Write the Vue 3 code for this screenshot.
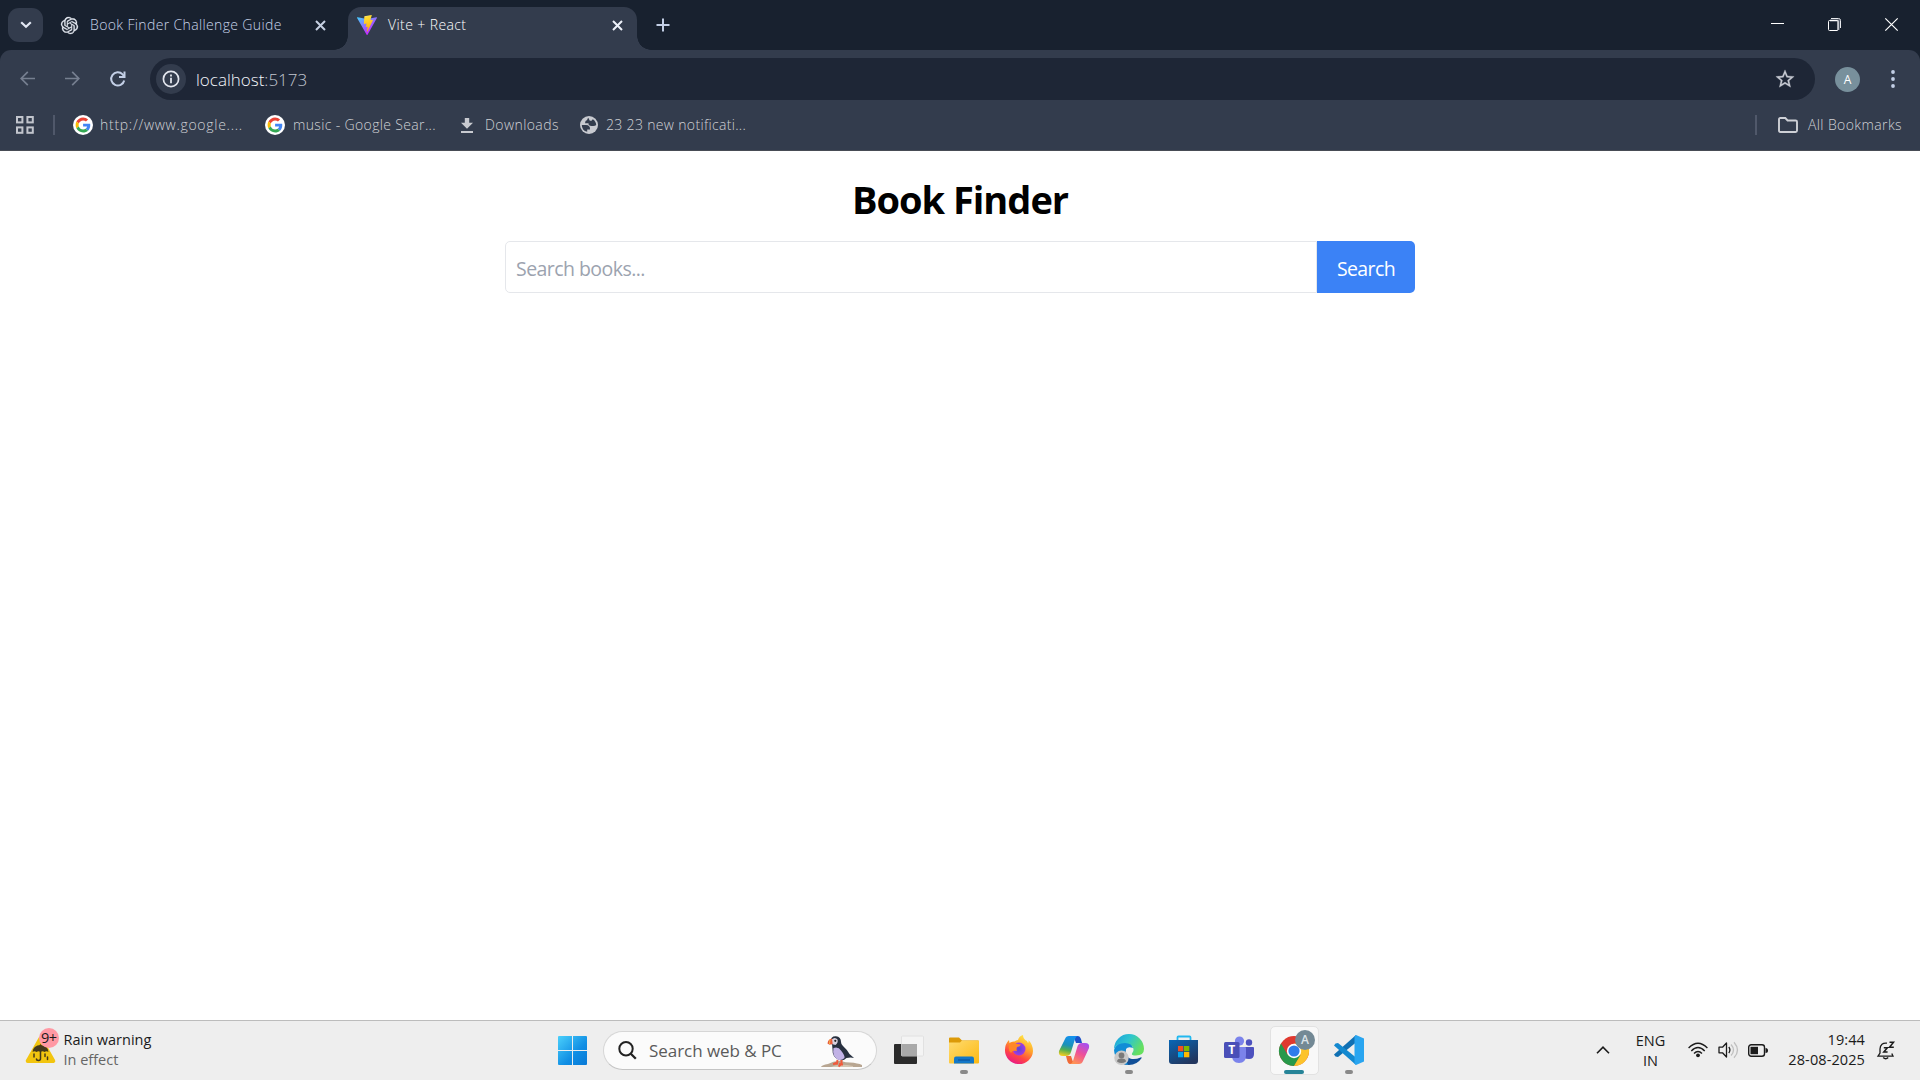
<script setup>
const bookmarks = [
  { icon: 'google', label: 'http://www.google....', cls: 'bm-a' },
  { icon: 'google', label: 'music - Google Sear...', cls: 'bm-b' },
  { icon: 'download', label: 'Downloads', cls: 'bm-c' },
  { icon: 'globe', label: '23 23 new notificati...', cls: 'bm-d' },
]
</script>

<template>
  <div class="screen">
    <header class="tabstrip">
      <button class="tab-search">
        <svg width="12" height="8" viewBox="0 0 12 8"><path d="M1.2 1.2 6 5.8 10.8 1.2" fill="none" stroke="#e3e8f4" stroke-width="2.2" /></svg>
      </button>
      <div class="tab idle">
        <svg class="openai" width="17" height="17" viewBox="0 0 24 24"><path fill="#e8edf5" stroke="#e8edf5" stroke-width=".4" d="M22.2819 9.8211a5.9847 5.9847 0 0 0-.5157-4.9108 6.0462 6.0462 0 0 0-6.5098-2.9A6.0651 6.0651 0 0 0 4.9807 4.1818a5.9847 5.9847 0 0 0-3.9977 2.9 6.0462 6.0462 0 0 0 .7427 7.0966 5.98 5.98 0 0 0 .511 4.9107 6.051 6.051 0 0 0 6.5146 2.9001A5.9847 5.9847 0 0 0 13.2599 24a6.0557 6.0557 0 0 0 5.7718-4.2058 5.9894 5.9894 0 0 0 3.9977-2.9001 6.0557 6.0557 0 0 0-.7475-7.0729zm-9.022 12.6081a4.4755 4.4755 0 0 1-2.8764-1.0408l.1419-.0804 4.7783-2.7582a.7948.7948 0 0 0 .3927-.6813v-6.7369l2.02 1.1686a.071.071 0 0 1 .038.052v5.5826a4.504 4.504 0 0 1-4.4945 4.4944zm-9.6607-4.1254a4.4708 4.4708 0 0 1-.5346-3.0137l.142.0852 4.783 2.7582a.7712.7712 0 0 0 .7806 0l5.8428-3.3685v2.3324a.0804.0804 0 0 1-.0332.0615L9.74 19.9502a4.4992 4.4992 0 0 1-6.1408-1.6464zM2.3408 7.8956a4.485 4.485 0 0 1 2.3655-1.9728V11.6a.7664.7664 0 0 0 .3879.6765l5.8144 3.3543-2.0201 1.1685a.0757.0757 0 0 1-.071 0l-4.8303-2.7865A4.504 4.504 0 0 1 2.3408 7.872zm16.5963 3.8558L13.1038 8.364 15.1192 7.2a.0757.0757 0 0 1 .071 0l4.8303 2.7913a4.4944 4.4944 0 0 1-.6765 8.1042v-5.6772a.79.79 0 0 0-.407-.667zm2.0107-3.0231l-.142-.0852-4.7735-2.7818a.7759.7759 0 0 0-.7854 0L9.409 9.2297V6.8974a.0662.0662 0 0 1 .0284-.0615l4.8303-2.7866a4.4992 4.4992 0 0 1 6.6802 4.66zM8.3065 12.863l-2.02-1.1638a.0804.0804 0 0 1-.038-.0567V6.0742a4.4992 4.4992 0 0 1 7.3757-3.4537l-.142.0805L8.704 5.459a.7948.7948 0 0 0-.3927.6813zm1.0976-2.3654l2.602-1.4998 2.6069 1.4998v2.9994l-2.5974 1.4997-2.6067-1.4997Z" /></svg>
        <span class="tab-title t-idle">Book Finder Challenge Guide</span>
        <svg class="tab-x" width="11" height="11" viewBox="0 0 11 11"><path d="M1 1 10 10M10 1 1 10" stroke="#c6d0e2" stroke-width="2" /></svg>
      </div>
      <div class="tab active">
        <svg class="vite" width="20" height="20" viewBox="0 0 256 257">
          <defs>
            <linearGradient id="va" x1="0" y1="0" x2=".6" y2=".8"><stop offset="0" stop-color="#41d1ff" /><stop offset="1" stop-color="#bd34fe" /></linearGradient>
            <linearGradient id="vb" x1=".4" y1="0" x2=".6" y2="1"><stop offset="0" stop-color="#ffea83" /><stop offset=".1" stop-color="#ffdd35" /><stop offset="1" stop-color="#ffa800" /></linearGradient>
          </defs>
          <path fill="url(#va)" d="M255.153 37.938L134.897 252.976c-2.483 4.44-8.862 4.466-11.382.048L.875 37.958c-2.746-4.814 1.371-10.646 6.827-9.67l120.385 21.517a6.537 6.537 0 0 0 2.322-.004l117.867-21.483c5.438-.991 9.574 4.796 6.877 9.62Z" />
          <path fill="url(#vb)" d="M185.432.063L96.44 17.501a3.268 3.268 0 0 0-2.634 3.014l-5.474 92.456a3.268 3.268 0 0 0 3.997 3.378l24.777-5.718c2.318-.535 4.413 1.507 3.936 3.838l-7.361 36.047c-.495 2.426 1.782 4.5 4.151 3.78l15.304-4.649c2.372-.72 4.652 1.36 4.15 3.788l-11.698 56.621c-.732 3.542 3.979 5.473 5.943 2.437l1.313-2.028l72.516-144.72c1.215-2.423-.88-5.186-3.54-4.672l-25.505 4.922c-2.396.462-4.435-1.77-3.759-4.114l16.646-57.705c.677-2.35-1.37-4.583-3.769-4.113Z" />
        </svg>
        <span class="tab-title t-active">Vite + React</span>
        <svg class="tab-x" width="11" height="11" viewBox="0 0 11 11"><path d="M1 1 10 10M10 1 1 10" stroke="#eef2fa" stroke-width="2" /></svg>
      </div>
      <svg class="plus" width="14" height="14" viewBox="0 0 14 14"><path d="M7 .5v13M.5 7h13" stroke="#c3cfe6" stroke-width="2" /></svg>
      <div class="win-controls">
        <svg width="13" height="13" viewBox="0 0 13 13"><path d="M0 5.5h13" stroke="#fff" /></svg>
        <svg width="13" height="13" viewBox="0 0 13 13"><path d="M3 .5h7.5a2 2 0 0 1 2 2V10" fill="none" stroke="#e8eaee" /><path d="M2 2.5h8.5V12" fill="none" stroke="#8a909c" stroke-width="2" /><rect x=".5" y="2.5" width="9.5" height="10" rx="1" fill="none" stroke="#fff" /></svg>
        <svg width="13" height="13" viewBox="0 0 13 13"><path d="M.3.3 12.7 12.7M12.7.3.3 12.7" stroke="#fff" stroke-width="1.2" /></svg>
      </div>
    </header>

    <div class="chrome">
      <div class="toolbar">
        <svg class="nav" width="15" height="15" viewBox="0 0 15 15"><path d="M15 7.5H1.2M7.8 .8 1.2 7.5l6.6 6.7" fill="none" stroke="#767f90" stroke-width="1.7" /></svg>
        <svg class="nav" width="15" height="15" viewBox="0 0 15 15"><path d="M0 7.5h13.8M7.2 .8l6.6 6.7-6.6 6.7" fill="none" stroke="#767f90" stroke-width="1.7" /></svg>
        <svg class="nav" width="16" height="16" viewBox="0 0 16 16"><path d="M14.2 9.4A6.600 6.600 0 1 1 12.600 3.400l1.600 1.900" fill="none" stroke="#c3cfe6" stroke-width="2" /><path d="M14.500 .5v5.500H9" fill="none" stroke="#c3cfe6" stroke-width="2" /></svg>
        <div class="omnibox">
          <span class="info">
            <svg width="18" height="18" viewBox="0 0 18 18"><circle cx="9" cy="9" r="7.6" fill="none" stroke="#e3e6ee" stroke-width="1.7" /><path d="M9 7.8v5.4M9 4.6v2" stroke="#e3e6ee" stroke-width="1.8" /></svg>
          </span>
          <span class="url">localhost<span class="port">:5173</span></span>
          <svg class="star" width="22" height="22" viewBox="0 0 24 24"><path fill="#c7cad3" d="M22 9.24l-7.19-.62L12 2 9.19 8.63 2 9.24l5.46 4.73L5.82 21 12 17.27 18.18 21l-1.63-7.03L22 9.24zM12 15.4l-3.76 2.27 1-4.28-3.32-2.88 4.38-.38L12 6.1l1.71 4.04 4.38.38-3.32 2.88 1 4.28L12 15.4z" stroke="#c7cad3" stroke-width=".3" /></svg>
        </div>
        <span class="avatar">A</span>
        <svg class="dots" width="4" height="18" viewBox="0 0 4 18"><g fill="#c3cfe6"><circle cx="2" cy="2" r="1.9" /><circle cx="2" cy="9" r="1.9" /><circle cx="2" cy="16" r="1.9" /></g></svg>
      </div>
      <div class="bookmarks">
        <svg class="apps" width="18" height="18" viewBox="0 0 18 18"><g fill="none" stroke="#c2c5cd" stroke-width="2"><rect x="1" y="1" width="5.4" height="5.4" /><rect x="11.4" y="1" width="5.4" height="5.4" /><rect x="1" y="11.4" width="5.4" height="5.4" /><rect x="11.4" y="11.4" width="5.4" height="5.4" /></g></svg>
        <i class="sep"></i>
        <div v-for="b in bookmarks" :key="b.label" class="bookmark" :class="b.cls">
          <svg v-if="b.icon === 'google'" width="20" height="20" viewBox="0 0 20 20">
            <circle cx="10" cy="10" r="10" fill="#fff" />
            <g transform="translate(2.6 2.5) scale(.312)">
              <path fill="#EA4335" d="M24 9.5c3.54 0 6.71 1.22 9.21 3.6l6.85-6.85C35.9 2.38 30.47 0 24 0 14.62 0 6.51 5.38 2.56 13.22l7.98 6.19C12.43 13.72 17.74 9.5 24 9.5z" />
              <path fill="#4285F4" d="M46.98 24.55c0-1.57-.15-3.09-.38-4.55H24v9.02h12.94c-.58 2.96-2.26 5.48-4.78 7.18l7.73 6c4.51-4.18 7.09-10.36 7.09-17.65z" />
              <path fill="#FBBC05" d="M10.53 28.59c-.48-1.45-.76-2.99-.76-4.59s.27-3.14.76-4.59l-7.98-6.19C.92 16.46 0 20.12 0 24c0 3.88.92 7.54 2.56 10.78l7.97-6.19z" />
              <path fill="#34A853" d="M24 48c6.48 0 11.93-2.13 15.89-5.81l-7.73-6c-2.15 1.45-4.92 2.3-8.16 2.3-6.26 0-11.57-4.22-13.47-9.91l-7.98 6.19C6.51 42.62 14.62 48 24 48z" />
            </g>
          </svg>
          <svg v-else-if="b.icon === 'download'" width="12" height="15" viewBox="0 0 12 15"><path fill="#c8cad0" d="M3.8 0h4.4v4.8H12L6 10.8 0 4.8h3.8zM0 13h12v2H0z" /></svg>
          <svg v-else width="18" height="18" viewBox="0 0 18 18"><circle cx="9" cy="9" r="9" fill="#c8cad0" /><path fill="#333c4d" d="M1.800 9h4.200q4.300 0 4 4.500H7.200v2.300A7 7 0 0 1 1.800 9zM8.300 1.800Q7 3 7.200 4 5 4.400 5 7.300h3.500Q8.300 10 11.500 10h1.700q2 0 3-1A7.200 7.200 0 0 0 12.800 3.200L11.500 4.800H9.800z" /></svg>
          <span>{{ b.label }}</span>
        </div>
        <div class="all">
          <i class="sep"></i>
          <svg width="20" height="16" viewBox="0 0 20 16"><path d="M1 13.5V2.3Q1 1 2.3 1h5l2.3 2.5h8Q19 3.5 19 4.8v8.7Q19 15 17.6 15H2.4Q1 15 1 13.5z" fill="none" stroke="#ced0d6" stroke-width="1.9" /></svg>
          <span>All Bookmarks</span>
        </div>
      </div>
    </div>

    <main class="page">
      <h1>Book Finder</h1>
      <div class="search-row">
        <div class="field">Search books...</div>
        <button class="go">Search</button>
      </div>
    </main>

    <footer class="taskbar">
      <div class="weather">
        <svg width="36" height="38" viewBox="0 0 36 38">
          <path d="M15.5 10.5 28.3 33H2.7z" fill="#f2c50f" stroke="#f2c50f" stroke-width="4" stroke-linejoin="round" />
          <path d="M7.5 24a8 7 0 0 1 16 0q-2-1.400-4 0-2-1.400-4 0-2-1.400-4 0-2-1.400-4 0z" fill="#443a1b" /><path d="M15.5 17v13.500q0 2-2 2t-2-1.500M9 26v3M20 26v2.500M22.500 29v2.500" fill="none" stroke="#443a1b" stroke-width="1.5" stroke-linecap="round" />
          <circle cx="24" cy="10" r="10" fill="#ff99a4" />
          <text x="24" y="15" text-anchor="middle" textLength="16">9+</text>
        </svg>
        <div class="wtext"><span class="w1">Rain warning</span><span class="w2">In effect</span></div>
      </div>

      <div class="dock">
        <div class="cell">
          <svg width="29" height="29" viewBox="0 0 29 29"><defs><linearGradient id="wn" x1="0" y1="0" x2="1" y2="1"><stop offset="0" stop-color="#4bd0fb" /><stop offset=".6" stop-color="#108ee4" /><stop offset="1" stop-color="#0879d6" /></linearGradient></defs><path fill="url(#wn)" d="M1 0h13v14H0V1q0-1 1-1zM15 0h13q1 0 1 1v13H15zM0 15h14v14H1q-1 0-1-1zM15 15h14v13q0 1-1 1H15z" /></svg>
        </div>
        <div class="tb-search">
          <svg class="mag" width="19" height="19" viewBox="0 0 19 19"><circle cx="8" cy="7.8" r="6.7" fill="none" stroke="#222" stroke-width="2" /><path d="m12.8 12.8 5 5" stroke="#222" stroke-width="2.3" /></svg>
          <span>Search web &amp; PC</span>
          <svg class="puffin" width="42" height="32" viewBox="0 0 42 32">
            <path d="M0 31q1-2 7-3 6-3.500 13-3 5 1.500 9 1.500 8 .5 12 2.500v2z" fill="#b8a692" /><path d="M10 31q8-4 22-1v1z" fill="#d4c5b2" />
            <path d="M9.500 6Q9.500 0 15 .300q5 .5 5 5.700 0 2.500 2 4 4 3.500 6.500 8l4.500 4-3.500-.5-4 .5q-3 3.500-7.500 2-7-3-6.500-11 .5-4-2-7z" fill="#27303f" />
            <path d="M12.500 12q5-1.500 7.500 2.500 4 5 3.500 7.500-3 3-7 1.500-5.500-3.500-4-11.500z" fill="#c1b2e6" />
            <path d="M10.500 3.500q3.500-3 6 0 1 3-2 5.500L10.500 8z" fill="#d9d2e0" /><path d="M11 2.500Q7 3 6.500 7.500l2 1.200 3.200-.8z" fill="#e75b3b" /><path d="M9 3.500 8.500 8" stroke="#f7b24a" /><circle cx="14.300" cy="4.800" r="1.100" fill="#222" />
            <path d="M16.500 24l-.5 3.500-4 .5M20.500 24v4l-3 2.500M13.500 26.500l2.500 1.500M18 28l4 .5" fill="none" stroke="#f15a3c" stroke-width="2" />
          </svg>
        </div>
        <div class="cell">
          <svg width="30" height="28" viewBox="0 1 30 28"><rect y="9" width="23" height="20" rx="1" fill="#2b2b2b" /><rect x="7.5" y="1" width="22" height="20" rx="1" fill="#f4f4f4" stroke="#ddd" stroke-width=".8" /><path d="M7.500 9H23v12H7.500z" fill="#a9a9a9" /></svg>
        </div>
        <div class="cell">
          <svg width="30" height="27" viewBox="0 1.500 30 27"><defs><linearGradient id="fo" x1="0" y1="0" x2="1" y2="1"><stop offset="0" stop-color="#ffdb70" /><stop offset="1" stop-color="#fcb912" /></linearGradient></defs><path d="M0 9V3q0-1 1-1h9l3 3h16q1 0 1 1v5H0z" fill="#dc9a08" /><path d="M0 7h11l2-2h16q1 0 1 1v21q0 1-1 1H1q-1 0-1-1z" fill="url(#fo)" /><path d="M5 28v-5q0-2 2-2h16q2 0 2 2v5z" fill="#1478c8" /><path d="M9 24.500h12" stroke="#0d559c" stroke-width="1.200" /></svg>
          <i class="run"></i>
        </div>
        <div class="cell">
          <svg class="lift" width="28" height="29" viewBox="0 0 28 29"><defs><linearGradient id="ff" x1=".8" y1="0" x2=".3" y2="1"><stop offset="0" stop-color="#fff04a" /><stop offset=".4" stop-color="#ffa52b" /><stop offset=".72" stop-color="#ff4543" /><stop offset="1" stop-color="#e8178a" /></linearGradient><radialGradient id="fp"><stop offset="0" stop-color="#5844d8" /><stop offset="1" stop-color="#a33be0" /></radialGradient></defs><path d="M0 15Q0 9 4 5l.5 3Q7 6 9.500 6.500 11 5 13 5q1-4 5-5 0 4 4 6l1 2q1-1 .5-3Q28 10 28 16a14 13.500 0 0 1-28-1z" fill="url(#ff)" /><circle cx="14" cy="14" r="6.500" fill="url(#fp)" /><path d="M5 8q4-2 7 1l4 .5q-1 2-4 2.500-1 2.500 0 4-5-1-6 2Q2 14 5 8z" fill="#ff8727" /></svg>
        </div>
        <div class="cell">
          <svg width="30" height="28" viewBox="0 0 30 28"><defs><linearGradient id="ca" x1=".5" y1="0" x2=".3" y2="1"><stop offset="0" stop-color="#1491ee" /><stop offset=".45" stop-color="#1a91b8" /><stop offset=".7" stop-color="#50ae50" /><stop offset="1" stop-color="#f4cd1f" /></linearGradient><linearGradient id="cb" x1=".8" y1="0" x2=".3" y2="1"><stop offset="0" stop-color="#a64ff1" /><stop offset=".5" stop-color="#ee5099" /><stop offset="1" stop-color="#ff9354" /></linearGradient></defs><path d="M15 0h4q2 0 3 3l1 4h-6q-2-5-2-7z" fill="#1b51c9" /><path d="M12 20q1 5 4 8h-5q-2 0-3-4l-1-4z" fill="#f06a36" /><path d="M6 3q1-3 4-3h9q-2 0-3 3l-4 13q-1 4-5 4H4q-5 0-4-5z" fill="url(#ca)" /><path d="M24 25q-1 3-4 3h-9q2 0 3-3l4-13q1-5 5-5h3q5 0 4 5z" fill="url(#cb)" /></svg>
        </div>
        <div class="cell">
          <svg width="30" height="30" viewBox="0 0 30 30"><defs><linearGradient id="ea" x1="0" y1="0" x2="1" y2=".5"><stop offset="0" stop-color="#199ddd" /><stop offset=".5" stop-color="#2dc5cf" /><stop offset="1" stop-color="#67e05f" /></linearGradient></defs><path d="M12 13q-2 8 4 10.500 5 1.500 10.500-1 1.500-.5 1 .8Q23 30 15 30 5 30 2 20 4 12 12 13z" fill="#114f97" /><path d="M0 15Q3 7 11 7q7 0 8 6-5-2-7 1-3 6 2 16Q1 28 0 15z" fill="#108dd6" /><path d="M0 14A15 15 0 0 1 30 14q0 6.500-8 6.500-5 0-4-2 2-2 1.500-4.500Q18 8 11 8 3 8 0 14z" fill="url(#ea)" /><circle cx="7.5" cy="22.800" r="7.200" fill="#c9c9c9" /><circle cx="7.5" cy="20.500" r="2.900" fill="#7a7a7a" /><path d="M3 26.500q0-3 4.500-3t4.500 3q-4.500 3.200-9 0z" fill="#7a7a7a" /></svg>
          <i class="run"></i>
        </div>
        <div class="cell">
          <svg width="30" height="30" viewBox="0 0 30 30"><defs><linearGradient id="st" x1="0" y1="0" x2=".6" y2="1"><stop offset="0" stop-color="#0867b6" /><stop offset="1" stop-color="#22365e" /></linearGradient></defs><path d="M8.500 8V2.500q0-1 1-1h11q1 0 1 1V8" fill="none" stroke="#22b8ef" stroke-width="1.800" /><path d="M0 5h29v21q0 3-3 3H3q-3 0-3-3z" fill="url(#st)" /><path d="M9 11h5.300v5.300H9z" fill="#f25022" /><path d="M15 11h5.300v5.300H15z" fill="#7fba00" /><path d="M9 17h5.300v5.300H9z" fill="#00a4ef" /><path d="M15 17h5.300v5.300H15z" fill="#ffb900" /></svg>
        </div>
        <div class="cell">
          <svg width="30" height="28" viewBox="0 0 30 28"><circle cx="25" cy="6.500" r="3.200" fill="#4d51be" /><path d="M20 11h9q1 0 1 1v6q0 5-5 5-3 0-5-1z" fill="#4d51be" /><circle cx="15.500" cy="5" r="4.600" fill="#7b83eb" /><path d="M9 11h12q1 0 1 1v7q0 8-7 8t-7-8z" fill="#7b83eb" /><rect y="6" width="15.500" height="16" rx="1.500" fill="#4a4fb8" /><text class="teams-t" x="7.800" y="18.200" text-anchor="middle">T</text></svg>
        </div>
        <div class="cell">
          <div class="tile">
            <svg width="36" height="38" viewBox="0 0 36 38"><circle cx="15" cy="23" r="15" fill="#e0392f" /><path d="M2 15.500A15 15 0 0 0 15 38l7-11-13.500-.5z" fill="#28994a" /><path d="M28 15.500H15L21.500 27 15 38A15 15 0 0 0 28 15.500z" fill="#fcc32c" /><circle cx="15" cy="23" r="7.200" fill="#fff" /><circle cx="15" cy="23" r="5.600" fill="#2f7ceb" /><circle cx="26" cy="12" r="10" fill="#738995" /><text class="badge-a" x="26" y="16.300" text-anchor="middle">A</text></svg>
          </div>
          <i class="run on"></i>
        </div>
        <div class="cell">
          <svg width="30" height="30" viewBox="0 0 30 30"><path d="M22 7.500 4 22l-2.500-.5L0 19.500 22 0z" fill="#1070b3" /><path d="M22 22.500 4 8l-2.500.5L0 10.500 22 30z" fill="#1389d0" /><path d="M22 0l8 3.500v23L22 30l-1.500-1.500v-27z" fill="#29a5f0" /></svg>
          <i class="run"></i>
        </div>
      </div>

      <div class="tray">
        <svg class="chev" width="14" height="8" viewBox="0 0 14 8"><path d="M1 7.200 7 1.200l6 6" fill="none" stroke="#1b1b1b" stroke-width="1.600" /></svg>
        <div class="lang"><span>ENG</span><span>IN</span></div>
        <svg class="wifi" width="20" height="16" viewBox="0 0 20 16"><g fill="none" stroke="#1b1b1b" stroke-width="1.400"><path d="M.6 6Q10-3.500 19.400 6" /><path d="M3.300 9Q10 2 16.700 9" /><path d="M6 11.600q4-4 8 0" /></g><circle cx="10" cy="13.300" r="1.900" fill="#1b1b1b" /></svg>
        <svg class="vol" width="21" height="18" viewBox="0 0 21 18"><path d="M1 6.200h3.500L8.500 2v14l-4-4.200H1z" fill="none" stroke="#1b1b1b" stroke-width="1.300" stroke-linejoin="round" /><path d="M10.800 6q2.200 3 0 6" fill="none" stroke="#1b1b1b" stroke-width="1.300" /><path d="M13 3.500q5 5.500 0 11M16 1.200q7 8 0 15.600" fill="none" stroke="#c0c0c0" stroke-width="1.300" /></svg>
        <svg class="bat" width="20" height="13" viewBox="0 0 20 13"><rect x=".7" y=".7" width="15.800" height="11.600" rx="2.500" fill="none" stroke="#1b1b1b" stroke-width="1.400" /><path d="M2.500 2.800h7.500v7.400H2.500z" fill="#1b1b1b" /><path d="M17.500 4q2.500 0 2.500 2.500T17.500 9z" fill="#1b1b1b" /></svg>
        <div class="clock"><span>19:44</span><span>28-08-2025</span></div>
        <svg class="bell" width="18" height="19" viewBox="0 0 18 19"><path d="M10 2.200Q3.500 1.500 3 8v4l-2 3.200h15l-1.200-2.700" fill="none" stroke="#1b1b1b" stroke-width="1.300" /><path d="M6.200 16.500q2.500 2.500 5 0M6.800 6.700h3.600l-3.600 4.200h3.800M12.500 1.200h4l-4 5h4.300" fill="none" stroke="#1b1b1b" stroke-width="1.500" /></svg>
      </div>
    </footer>
  </div>
</template>

<style>
body { margin: 0; overflow: hidden; }
</style>

<style scoped>
* { box-sizing: border-box; }
svg { display: block; flex: none; overflow: visible; }
button { border: 0; padding: 0; font: inherit; }
.screen { width: 1920px; height: 1080px; display: flex; flex-direction: column; background: #fff; font-family: "Open Sans", "Noto Sans", sans-serif; font-size: 14px; white-space: nowrap; }

.tabstrip { height: 50px; flex: none; display: flex; align-items: center; background: #18212f; }
.tab-search { width: 35px; height: 34px; margin-left: 8px; border-radius: 11px; background: #333c4d; display: flex; align-items: center; justify-content: center; }
.tab { display: flex; align-items: center; }
.idle { width: 305px; padding-left: 18px; }
.tab-title { flex: 1; font-weight: 300; line-height: 20px; }
.t-idle { color: #c8d4ea; margin-left: 12px; letter-spacing: .36px; }
.idle .tab-x { margin-right: 22.5px; }
.active { position: relative; width: 289px; height: 43px; align-self: flex-end; padding: 0 14px 7px 9px; background: #333c4d; border-radius: 13px 13px 0 0; }
.active::before, .active::after { content: ""; position: absolute; bottom: 0; width: 14px; height: 14px; }
.active::before { left: -14px; background: radial-gradient(circle at 0 0, transparent 13.5px, #333c4d 14px); }
.active::after { right: -14px; background: radial-gradient(circle at 100% 0, transparent 13.5px, #333c4d 14px); }
.t-active { color: #fff; margin-left: 11px; letter-spacing: .4px; }
.plus { margin-left: 19px; }
.win-controls { margin-left: auto; display: flex; align-items: center; gap: 44px; padding: 0 22px 1px 0; }

.chrome { height: 101px; flex: none; background: #18212f; }
.toolbar { height: 58px; display: flex; align-items: center; padding: 0 25px 0 20px; background: #333c4d; border-radius: 11px 11px 0 0; }
.nav { margin-right: 30px; margin-bottom: 1px; }
.nav:nth-child(3) { margin-right: 24px; }
.omnibox { flex: none; width: 1665px; height: 42px; border-radius: 21px; background: #1e2636; display: flex; align-items: center; padding: 0 19px 0 6px; }
.info { width: 30px; height: 30px; border-radius: 50%; background: #333c4d; display: flex; align-items: center; justify-content: center; }
.url { margin-left: 10px; flex: 1; color: #f3f5fa; font-size: 17px; font-weight: 300; line-height: 24px; letter-spacing: 0; padding-top: 1px; }
.port { color: #c4c8d2; }
.avatar { flex: none; width: 25px; height: 25px; margin-left: 20px; border-radius: 50%; background: #78909c; color: #fff; display: flex; align-items: center; justify-content: center; font-size: 12px; font-weight: 500; }
.dots { margin-left: 31px; }
.bookmarks { height: 43px; display: flex; align-items: center; padding: 0 18px 8px 15.5px; color: #d0d1d5; font-weight: 300; background: #333c4d; border-bottom: 1px solid #484c55; }
.sep { width: 2px; height: 20px; background: #50586a; }
.apps + .sep { margin-left: 19px; margin-right: 18.5px; }
.bookmark { display: flex; align-items: center; }
.bookmark span { margin-left: 7px; line-height: 20px; }
.bm-a { width: 192px; }
.bm-a span { letter-spacing: .72px; }
.bm-b { width: 196px; }
.bm-b span { margin-left: 8px; letter-spacing: .35px; }
.bm-c { width: 119px; }
.bm-c span { margin-left: 12px; letter-spacing: .42px; }
.bm-d span { margin-left: 8px; letter-spacing: .33px; }
.all { margin-left: auto; display: flex; align-items: center; height: 20px; }
.all span { letter-spacing: .4px; line-height: 20px; }
.all svg { margin: 0 10px 0 21px; }

.page { flex: 1; display: flex; flex-direction: column; align-items: center; padding-top: 23px; }
h1 { margin: 0; font-size: 38px; line-height: 50px; font-weight: 700; color: #000; letter-spacing: -1px; }
.search-row { display: flex; width: 910px; height: 52px; margin-top: 17px; }
.field { flex: 1; border: 1px solid #e5e7eb; border-radius: 5px 0 0 5px; padding: 2px 10px 0; line-height: 50px; color: #9ca3af; font-size: 19.5px; letter-spacing: -.55px; }
.go { width: 98px; background: #3b82f6; color: #fff; border-radius: 0 5px 5px 0; font-size: 19.5px; padding-top: 2px; letter-spacing: -.6px; }

.taskbar { height: 60px; flex: none; display: flex; border-top: 1px solid #bcbcbc; background: #eee; color: #1b1b1b; font-size: 14.5px; }
.weather { width: 545px; display: flex; padding: 7px 0 0 25px; }
.weather text { font-size: 14.5px; fill: #1b1b1b; }
.wtext { display: flex; flex-direction: column; margin-left: 2.5px; line-height: 20px; padding-top: 2px; }
.w2 { color: #666; }
.dock { display: flex; }
.cell { position: relative; width: 55px; height: 59px; display: flex; align-items: center; justify-content: center; padding-bottom: 1px; }
.cell:first-child { padding-bottom: 0; }
.lift { margin-bottom: 1px; }
.run { position: absolute; bottom: 6px; left: 23.5px; width: 8px; height: 4px; border-radius: 2px; background: #898989; }
.run.on { width: 20px; left: 17.5px; background: #268498; }
.tb-search { width: 274px; height: 39px; margin: 10px 4.5px 0 3px; border: 1px solid #d6d6d6; border-bottom-color: #c4c4c4; border-radius: 20px; background: #fbfbfb; display: flex; align-items: center; padding: 0 13px 0 14px; }
.tb-search span { flex: 1; margin-left: 12px; color: #5a5a5a; font-size: 17px; letter-spacing: -.05px; }
.puffin { margin-top: 2px; }
.tile { width: 49px; height: 49px; border: 1px solid #e2e2e2; border-radius: 5px; background: #f8f8f8; display: flex; align-items: center; justify-content: center; padding: 0 0 7px 5px; }
.teams-t { font-size: 12px; font-weight: 700; fill: #fff; }
.badge-a { font-size: 12px; font-weight: 600; fill: #dce4ea; }
.tray { margin-left: auto; display: flex; align-items: center; padding-right: 25.5px; }
.chev { margin-bottom: 2px; }
.lang { width: 40px; margin-left: 21px; display: flex; flex-direction: column; align-items: center; line-height: 20px; }
.wifi { margin-left: 17px; margin-bottom: 1px; }
.vol { margin-left: 10px; margin-bottom: 1px; }
.bat { margin-left: 9px; margin-bottom: 1px; }
.clock { width: 97.5px; display: flex; flex-direction: column; align-items: flex-end; line-height: 20px; margin-bottom: 2px; letter-spacing: .1px; }
.bell { margin-left: 11.5px; margin-bottom: 1px; }
</style>
